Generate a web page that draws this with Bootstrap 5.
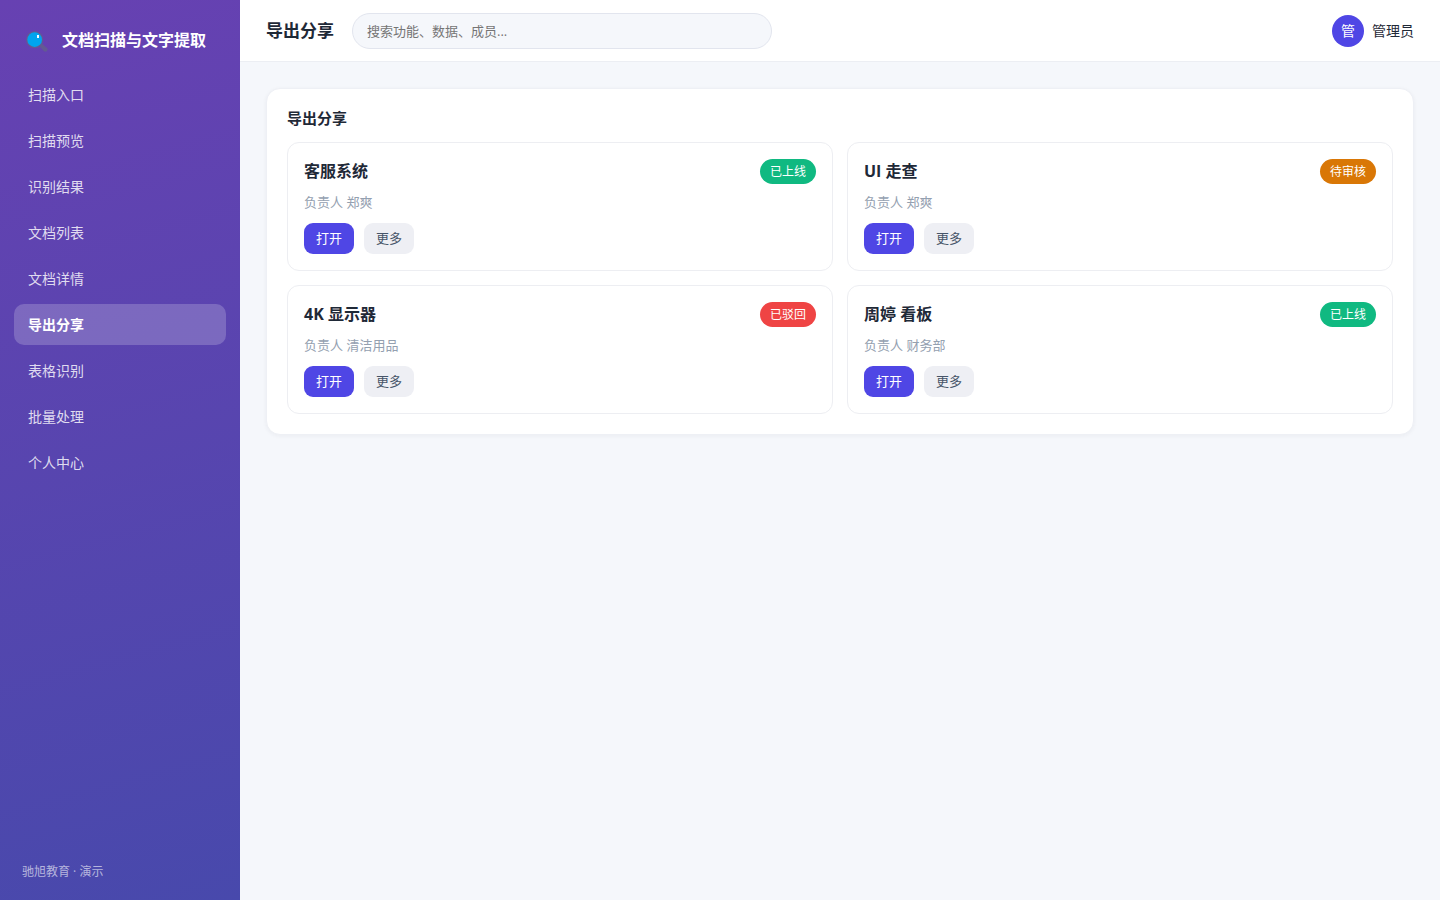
<!DOCTYPE html>
<html lang="zh-CN">
<head>
<meta charset="utf-8">
<meta name="viewport" content="width=device-width, initial-scale=1">
<title>导出分享 - 文档扫描与文字提取</title>
<link href="https://cdn.jsdelivr.net/npm/bootstrap@5.3.0/dist/css/bootstrap.min.css" rel="stylesheet">
<style>
  body {
    font-family: "Open Sans", "Noto Sans CJK SC", sans-serif;
    font-size: 14px;
    line-height: 21px;
    color: #1f2937;
    background: #f5f7fb;
  }
  .sidebar {
    width: 240px;
    padding: 20px 14px 19px;
    background: linear-gradient(165deg, #6741b2, #4849ac);
  }
  .brand { gap: 12px; padding: 7px 10px; margin-bottom: 14px; color: #fff; font-size: 16px; line-height: 24px; font-weight: 600; }
  .brand:hover { color: #fff; }
  .side-nav { gap: 5px; }
  .side-nav .nav-link { padding: 10px 14px; border-radius: 10px; color: rgba(255,255,255,.82); }
  .side-nav .nav-link:hover { color: #fff; }
  .side-nav .nav-link.active { background: rgba(255,255,255,.2); color: #fff; font-weight: 700; }
  .side-foot { padding: 0 8px; font-size: 12px; line-height: 18px; color: rgba(255,255,255,.6); }
  .topbar { padding: 12px 26px; gap: 18px; border-bottom: 1px solid #eceef3; min-height: 62px; }
  .page-title { font-size: 17px; line-height: 24px; font-weight: 700; }
  .search { max-width: 420px; height: 36px; padding: 0 14px; font-size: 13px; background: #f5f7fb; border-color: #e2e5ee; }
  .search::placeholder { color: #757575; }
  .avatar { width: 32px; height: 32px; background: #4f46e5; }
  .content { padding: 26px; }
  .panel { padding: 20px; border: 1px solid #eef0f5; border-radius: 14px; box-shadow: 0 1px 4px rgba(31,41,55,.05); }
  .panel-title { font-size: 15px; line-height: 19px; font-weight: 700; margin-bottom: 14px; }
  .tiles { gap: 14px; grid-template-columns: repeat(2, minmax(0, 1fr)); }
  .tile { padding: 16px; border: 1px solid #edeef2; border-radius: 12px; }
  .tile-title { font-size: 16px; line-height: 25px; font-weight: 700; }
  .tile-meta { margin: 8px 0 10px; font-size: 13px; line-height: 21px; color: #94a0b0; }
  .status { padding: 0 10px; font-size: 12px; line-height: 25px; font-weight: 400; }
  .st-ok { background: #10b981; }
  .st-wait { background: #d97706; }
  .st-no { background: #ef4444; }
  .acts { gap: 10px; }
  .act { padding: 5px 12px; font-size: 13px; line-height: 21px; border: 0; border-radius: 9px; }
  .act-main, .act-main:hover { background: #4f46e5; color: #fff; }
  .act-more, .act-more:hover { background: #eeeff4; color: #475569; }
</style>
</head>
<body>
<div class="d-flex min-vh-100">
  <aside class="sidebar d-flex flex-column flex-shrink-0">
    <a href="#" class="brand d-flex align-items-center text-decoration-none">
      <svg width="26" height="26" viewBox="0 0 78 78" aria-hidden="true">
        <path d="M44 52l6-4 6 4 14 12q3 4-1 8-4 4-9 1L48 60z" fill="#635993"/>
        <circle cx="32" cy="38" r="26" fill="#635993"/>
        <circle cx="32" cy="38" r="22" fill="#00a4ef"/>
        <rect x="39" y="24" width="6" height="9" fill="#fff"/>
      </svg>
      <span>文档扫描与文字提取</span>
    </a>
    <nav class="side-nav nav flex-column">
      <a class="nav-link" href="#">扫描入口</a>
      <a class="nav-link" href="#">扫描预览</a>
      <a class="nav-link" href="#">识别结果</a>
      <a class="nav-link" href="#">文档列表</a>
      <a class="nav-link" href="#">文档详情</a>
      <a class="nav-link active" href="#" aria-current="page">导出分享</a>
      <a class="nav-link" href="#">表格识别</a>
      <a class="nav-link" href="#">批量处理</a>
      <a class="nav-link" href="#">个人中心</a>
    </nav>
    <div class="side-foot mt-auto">驰旭教育 · 演示</div>
  </aside>
  <div class="flex-grow-1">
    <header class="topbar d-flex align-items-center bg-white">
      <h1 class="page-title flex-shrink-0 mb-0">导出分享</h1>
      <input type="search" class="search form-control rounded-pill" placeholder="搜索功能、数据、成员..." aria-label="搜索">
      <div class="d-flex align-items-center gap-2 ms-auto flex-shrink-0">
        <span class="avatar rounded-circle d-flex align-items-center justify-content-center text-white">管</span>
        <span>管理员</span>
      </div>
    </header>
    <main class="content">
      <section class="panel bg-white">
        <h2 class="panel-title">导出分享</h2>
        <div class="tiles d-grid">
          <article class="tile">
            <div class="d-flex justify-content-between">
              <h3 class="tile-title mb-0">客服系统</h3>
              <span class="status st-ok badge rounded-pill">已上线</span>
            </div>
            <p class="tile-meta">负责人 郑爽</p>
            <div class="acts d-flex">
              <button type="button" class="btn act act-main">打开</button>
              <button type="button" class="btn act act-more">更多</button>
            </div>
          </article>
          <article class="tile">
            <div class="d-flex justify-content-between">
              <h3 class="tile-title mb-0">UI 走查</h3>
              <span class="status st-wait badge rounded-pill">待审核</span>
            </div>
            <p class="tile-meta">负责人 郑爽</p>
            <div class="acts d-flex">
              <button type="button" class="btn act act-main">打开</button>
              <button type="button" class="btn act act-more">更多</button>
            </div>
          </article>
          <article class="tile">
            <div class="d-flex justify-content-between">
              <h3 class="tile-title mb-0">4K 显示器</h3>
              <span class="status st-no badge rounded-pill">已驳回</span>
            </div>
            <p class="tile-meta">负责人 清洁用品</p>
            <div class="acts d-flex">
              <button type="button" class="btn act act-main">打开</button>
              <button type="button" class="btn act act-more">更多</button>
            </div>
          </article>
          <article class="tile">
            <div class="d-flex justify-content-between">
              <h3 class="tile-title mb-0">周婷 看板</h3>
              <span class="status st-ok badge rounded-pill">已上线</span>
            </div>
            <p class="tile-meta">负责人 财务部</p>
            <div class="acts d-flex">
              <button type="button" class="btn act act-main">打开</button>
              <button type="button" class="btn act act-more">更多</button>
            </div>
          </article>
        </div>
      </section>
    </main>
  </div>
</div>
<script src="https://cdn.jsdelivr.net/npm/bootstrap@5.3.0/dist/js/bootstrap.bundle.min.js"></script>
</body>
</html>
